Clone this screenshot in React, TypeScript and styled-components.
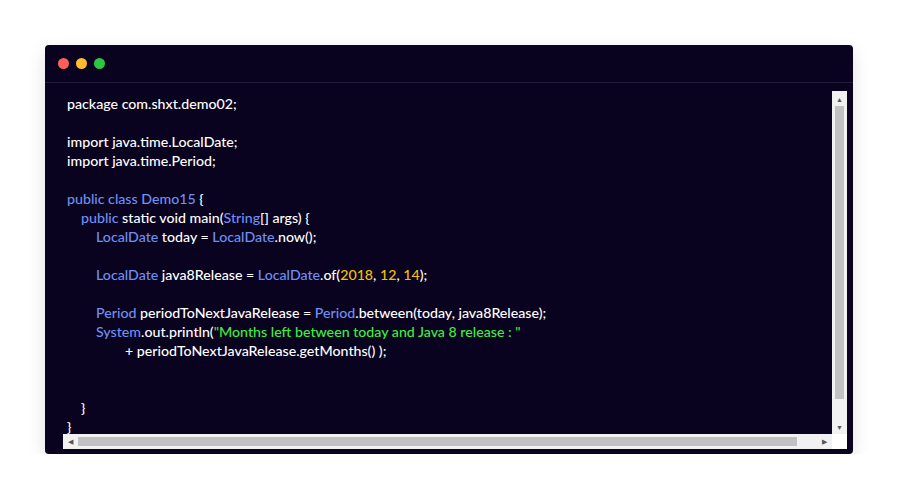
import React from "react";
import styled, { createGlobalStyle } from "styled-components";

const G = createGlobalStyle`
  body { margin: 0; background: #fff; font-family: Lato, "Open Sans", sans-serif; }
`;
const Page = styled.div`
  padding: 45px 46px 0 45px;
`;
const Card = styled.div`
  width: 808px; height: 409px; background: #0a0320; border-radius: 4px;
  box-shadow: 0 6px 18px rgba(0,0,0,0.12);
  display: flex; flex-direction: column;
`;
const TitleBar = styled.div`
  height: 37px; border-bottom: 1px solid #221b3a; display: flex; align-items: center;
  gap: 7px; padding-left: 13px;
`;
const Dot = styled.span<{ c: string }>`
  width: 11px; height: 11px; border-radius: 50%; background: ${p => p.c};
`;
const Body = styled.div`
  margin: 8px 6px 0 18px; height: 358px; display: grid;
  grid-template-columns: 1fr 15px; grid-template-rows: 1fr 15px;
`;
const Code = styled.div`
  padding: 3px 0 0 4px; overflow: hidden; color: #fff; font-size: 14.2px; font-weight: 500;
`;
const Line = styled.div<{ i?: number }>`
  height: 19px; line-height: 19px; white-space: pre; padding-left: ${p => (p.i || 0)}px;
`;
const B = styled.span` color: #6f8ff2; `;
const Y = styled.span` color: #f2c200; `;
const Gr = styled.span` color: #3cf03c; `;
const VBar = styled.div`
  background: #f1f1f1; display: flex; flex-direction: column; align-items: center;
`;
const HBar = styled.div`
  background: #f1f1f1; display: flex; align-items: center;
`;
const Corner = styled.div` background: #fff; `;
const Arrow = styled.div` width: 15px; height: 15px; display: flex; align-items: center; justify-content: center; font-size: 7px; color: #555; `;
const VThumb = styled.div` width: 9px; flex: 1; background: #c1c1c1; `;
const HThumb = styled.div` height: 9px; flex: 1; background: #c1c1c1; margin-right: 20px; `;

export default function App() {
  return (
    <>
      <G />
      <Page>
        <Card>
          <TitleBar>
            <Dot c="#fe5f57" /><Dot c="#febc2e" /><Dot c="#28c840" />
          </TitleBar>
          <Body>
            <Code>
              <Line>package com.shxt.demo02;</Line>
              <Line> </Line>
              <Line>import java.time.LocalDate;</Line>
              <Line>import java.time.Period;</Line>
              <Line> </Line>
              <Line><B>public class Demo15</B> {"{"}</Line>
              <Line i={14}><B>public</B> static void main(<B>String</B>[] args) {"{"}</Line>
              <Line i={29}><B>LocalDate</B> today = <B>LocalDate</B>.now();</Line>
              <Line> </Line>
              <Line i={29}><B>LocalDate</B> java8Release = <B>LocalDate</B>.of(<Y>2018</Y>, <Y>12</Y>, <Y>14</Y>);</Line>
              <Line> </Line>
              <Line i={29}><B>Period</B> periodToNextJavaRelease = <B>Period</B>.between(today, java8Release);</Line>
              <Line i={29}><B>System</B>.out.println(<Gr>"Months left between today and Java 8 release : "</Gr></Line>
              <Line i={58}>+ periodToNextJavaRelease.getMonths() );</Line>
              <Line> </Line>
              <Line> </Line>
              <Line i={14}>{"}"}</Line>
              <Line>{"}"}</Line>
            </Code>
            <VBar>
              <Arrow>▲</Arrow><VThumb /><div style={{ height: 20 }} /><Arrow>▼</Arrow>
            </VBar>
            <HBar>
              <Arrow>◀</Arrow><HThumb /><Arrow>▶</Arrow>
            </HBar>
            <Corner />
          </Body>
        </Card>
      </Page>
    </>
  );
}
